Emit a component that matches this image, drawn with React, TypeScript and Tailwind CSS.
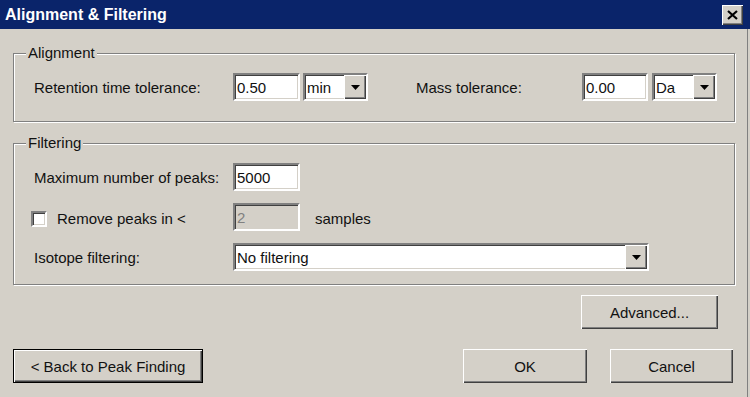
import type { ReactNode } from "react";

const sunken =
  "border-2 border-t-[#808080] border-l-[#808080] border-b-white border-r-white shadow-[inset_1px_1px_0_#404040,inset_-1px_-1px_0_#d4d0c8]";
const raised =
  "bg-[#d4d0c8] shadow-[inset_1px_1px_0_#fff,inset_-1px_-1px_0_#404040,inset_-2px_-2px_0_#808080]";

function Arrow() {
  return (
    <svg width="9" height="5" viewBox="0 0 9 5" aria-hidden="true">
      <path d="M0 0h9L4.5 5z" fill="#000" />
    </svg>
  );
}

function TextBox({ value, className = "", disabled = false }: { value: string; className?: string; disabled?: boolean }) {
  return (
    <div
      className={`${sunken} flex h-[28px] items-center pl-[2px] ${disabled ? "bg-[#d4d0c8] text-[#808080]" : "bg-white"} ${className}`}
    >
      {value}
    </div>
  );
}

function Combo({ value, className = "" }: { value: string; className?: string }) {
  return (
    <div className={`${sunken} flex h-[28px] items-stretch bg-white ${className}`}>
      <span className="flex flex-1 items-center pl-[2px]">{value}</span>
      <span className={`${raised} grid w-[22px] place-items-center`}>
        <Arrow />
      </span>
    </div>
  );
}

function Group({ label, className = "", children }: { label: string; className?: string; children: ReactNode }) {
  // etched frame: gray line with a white line 1px down/right
  return (
    <div
      className={`relative border border-[#808080] shadow-[inset_1px_1px_0_#fff,1px_1px_0_#fff] ${className}`}
    >
      <span className="absolute -top-[10px] left-[12px] bg-[#d4d0c8] px-[2px] leading-[18px]">{label}</span>
      {children}
    </div>
  );
}

function Button({ children, className = "", isDefault = false }: { children: ReactNode; className?: string; isDefault?: boolean }) {
  return (
    <button
      className={`${raised} grid h-[34px] place-items-center ${isDefault ? "border border-black" : ""} ${className}`}
    >
      {children}
    </button>
  );
}

export default function App() {
  return (
    <div className="flex h-[397px] w-[750px] flex-col overflow-hidden whitespace-nowrap bg-[#d4d0c8] text-[15px] leading-none text-[#111] [font-family:'Liberation_Sans',Arial,sans-serif]">
      {/* title bar */}
      <div className="flex h-[29px] shrink-0 items-center justify-between bg-[#0a246a] pl-[5px] pr-[7px]">
        <span className="text-[16px] font-bold text-white">Alignment &amp; Filtering</span>
        <button className={`${raised} grid h-[20px] w-[21px] place-items-center`} aria-label="Close">
          <svg width="11" height="10" viewBox="0 0 11 10" aria-hidden="true">
            <path d="M1 1l9 8M10 1l-9 8" stroke="#000" strokeWidth="2.2" />
          </svg>
        </button>
      </div>

      <div className="mr-[2px] flex flex-1 flex-col border-r border-[#808080] pl-[13px] pr-[12px] pt-[24px]">
        <Group label="Alignment" className="h-[69px] pl-[20px] pt-[19px]">
          <div className="flex items-center">
            <span className="w-[199px]">Retention time tolerance:</span>
            <TextBox value="0.50" className="w-[67px]" />
            <Combo value="min" className="ml-[3px] w-[65px]" />
            <span className="ml-[48px] w-[166px]">Mass tolerance:</span>
            <TextBox value="0.00" className="w-[66px]" />
            <Combo value="Da" className="ml-[4px] w-[65px]" />
          </div>
        </Group>

        <Group label="Filtering" className="mt-[21px] flex h-[142px] flex-col gap-[12px] pl-[20px] pt-[19px]">
          <div className="flex items-center">
            <span className="w-[199px]">Maximum number of peaks:</span>
            <TextBox value="5000" className="w-[67px]" />
          </div>
          <div className="flex items-center">
            <span className={`${sunken} -ml-[3px] mr-[10px] mt-[3px] h-[16px] w-[16px] bg-white`} />
            <span className="mt-[3px] w-[176px]">Remove peaks in &lt;</span>
            <TextBox value="2" disabled className="w-[67px]" />
            <span className="ml-[15px] mt-[2px]">samples</span>
          </div>
          <div className="flex items-center">
            <span className="w-[199px]">Isotope filtering:</span>
            <Combo value="No filtering" className="w-[416px]" />
          </div>
        </Group>

        <div className="mt-[10px] flex justify-end pr-[17px]">
          <Button className="h-[31px] w-[137px]">Advanced...</Button>
        </div>

        <div className="mt-[20px] flex items-center pr-[2px]">
          <Button isDefault className="w-[190px]">&lt; Back to Peak Finding</Button>
          <Button className="ml-auto w-[124px]">OK</Button>
          <Button className="ml-[23px] w-[123px]">Cancel</Button>
        </div>
      </div>
    </div>
  );
}
